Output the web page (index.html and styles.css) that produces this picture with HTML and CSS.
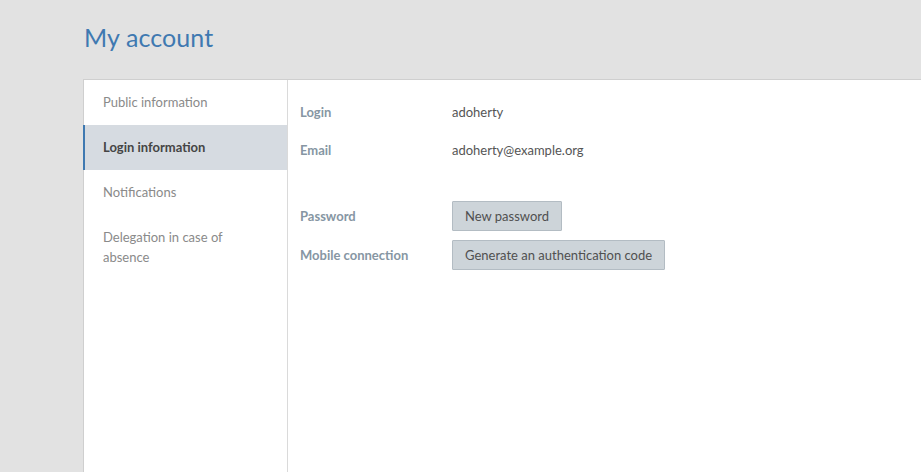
FILE: index.html
```html
<!DOCTYPE html>
<html lang="en">
<head>
<meta charset="utf-8">
<title>My account</title>
<link rel="stylesheet" href="styles.css">
</head>
<body>
<div class="page">
  <h1 class="title">My account</h1>
  <div class="panel">
    <nav class="sidebar">
      <a class="nav-item">Public information</a>
      <a class="nav-item active">Login information</a>
      <a class="nav-item">Notifications</a>
      <a class="nav-item">Delegation in case of absence</a>
    </nav>
    <main class="content">
      <div class="row"><span class="label">Login</span><span class="value">adoherty</span></div>
      <div class="row"><span class="label">Email</span><span class="value">adoherty@example.org</span></div>
      <div class="row gap-top"><span class="label">Password</span><button class="btn">New password</button></div>
      <div class="row btn-row"><span class="label">Mobile connection</span><button class="btn">Generate an authentication code</button></div>
    </main>
  </div>
</div>
</body>
</html>
```
FILE: styles.css
```css
html, body {
  margin: 0;
  padding: 0;
  height: 100%;
  overflow: hidden;
}
body {
  background: #e2e2e2;
  font-family: Lato, "Open Sans", "Liberation Sans", sans-serif;
  font-size: 13px;
  color: #555;
}
.page {
  padding-left: 83px;
  display: flex;
  flex-direction: column;
  height: 100%;
}
.title {
  margin: 0;
  padding: 22px 0 0 1px;
  height: 57px;
  font-size: 25px;
  font-weight: 400;
  color: #3f79b1;
  letter-spacing: 0.1px;
}
.panel {
  flex: 1;
  display: flex;
  background: #fff;
  border-top: 1px solid #cfcfcf;
  border-left: 1px solid #cfcfcf;
}
.sidebar {
  width: 203px;
  border-right: 1px solid #dadada;
  display: flex;
  flex-direction: column;
}
.nav-item {
  display: block;
  padding: 14px 20px 14px 18px;
  line-height: 17px;
  color: #8a8a8a;
  border-left: 2px solid transparent;
  margin-left: -1px;
}
.nav-item.active {
  background: #d6dbe1;
  border-left-color: #3f79b1;
  color: #454545;
  font-weight: 700;
}
.nav-item:last-child {
  line-height: 20px;
  padding-top: 12px;
}
.content {
  flex: 1;
  padding: 17px 12px;
  display: flex;
  flex-direction: column;
  gap: 8px;
}
.row {
  display: flex;
  align-items: center;
  min-height: 30px;
}
.row.gap-top {
  margin-top: 28px;
}
.row.btn-row {
  margin-top: 1px;
}
.label {
  width: 152px;
  color: #8696a3;
  font-weight: 700;
}
.value {
  color: #555;
}
.btn {
  font-family: inherit;
  font-size: 13px;
  color: #505050;
  background: #cdd4d9;
  border: 1px solid #b3bcc3;
  border-radius: 1px;
  height: 30px;
  padding: 0 12px;
  cursor: pointer;
}
```
